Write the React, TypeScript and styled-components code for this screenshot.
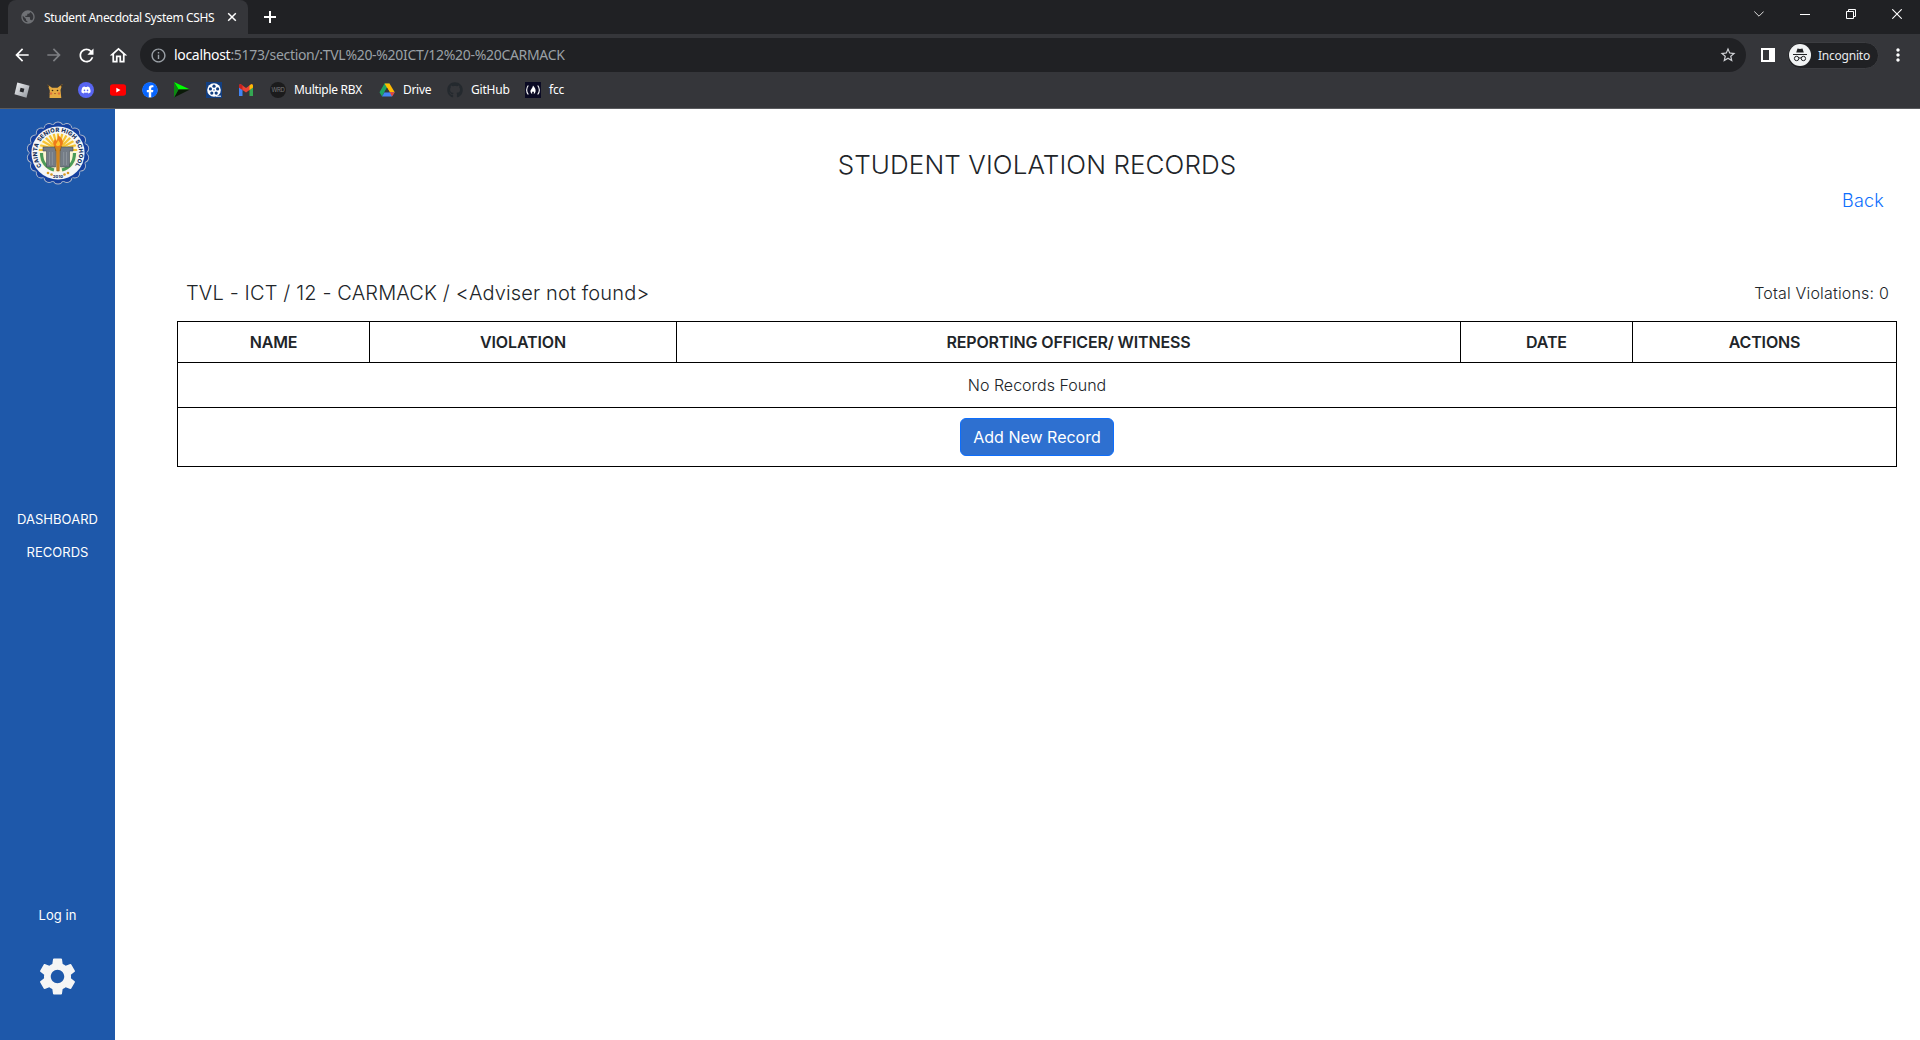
import React from "react";
import styled, { createGlobalStyle } from "styled-components";
import { FaDiscord, FaGithub, FaFacebook } from "react-icons/fa";
import {
  MdArrowBack,
  MdArrowForward,
  MdRefresh,
  MdOutlineHome,
  MdStarBorder,
  MdInfoOutline,
  MdSettings,
  MdMoreVert,
  MdPublic,
} from "react-icons/md";

const ui = `"Noto Sans", "Open Sans", sans-serif`;

const GlobalStyle = createGlobalStyle`
  *, *::before, *::after { box-sizing: border-box; }
  body { margin: 0; background: #fff; overflow: hidden; }
`;

const Window = styled.div`
  display: flex;
  flex-direction: column;
  height: 1040px;
  width: 1920px;
  font-family: Inter, sans-serif;
  color: #212529;
`;

const Chrome = styled.header`
  display: flex;
  flex-direction: column;
  flex: none;
  height: 109px;
  background: #35363a;
  border-bottom: 1px solid #5a5b5e;
  font-family: ${ui};
`;

const TabStrip = styled.div`
  display: flex;
  align-items: flex-start;
  height: 34px;
  padding-left: 8px;
  background: #202124;
`;

const Tab = styled.div`
  display: flex;
  align-items: center;
  width: 240px;
  height: 34px;
  padding-left: 12px;
  border-radius: 8px 8px 0 0;
  background: #35363a;
  color: #fff;
  font-size: 12px;
`;

const TabTitle = styled.span`
  width: 173px;
  margin-left: 8px;
  white-space: nowrap;
  letter-spacing: -0.35px;
`;

const Icon = styled.span<{ $left?: number; $color?: string }>`
  display: flex;
  flex: none;
  margin-left: ${(p) => p.$left ?? 0}px;
  color: ${(p) => p.$color ?? "#fff"};
`;

const WindowControls = styled.div`
  display: flex;
  gap: 36px;
  margin: 9px 18px 0 auto;
`;

const Toolbar = styled.div`
  display: flex;
  align-items: center;
  height: 42px;
  padding: 0 0 0 12px;
`;

const Address = styled.div`
  display: flex;
  align-items: center;
  width: 1606px;
  height: 34px;
  margin-left: 11px;
  padding: 0 9px 0 10px;
  border-radius: 17px;
  background: #202124;
`;

const Url = styled.span`
  flex: 1;
  margin-left: 7px;
  padding-bottom: 1px;
  color: #9aa0a6;
  font-size: 14px;
  letter-spacing: -0.31px;
  white-space: nowrap;
`;

const Host = styled.span`
  color: #fff;
`;

const Profile = styled.div`
  display: flex;
  align-items: center;
  gap: 7px;
  width: 92px;
  height: 27px;
  margin-left: 12px;
  padding-left: 1px;
  border: 1px solid #3c3d41;
  border-radius: 14px;
  background: #202124;
  color: #e8eaed;
  font-size: 12px;
  letter-spacing: -0.22px;
`;

const Bookmarks = styled.nav`
  display: flex;
  align-items: center;
  height: 28px;
  padding-left: 14px;
`;

const Bookmark = styled.a<{ $width: number; $spacing?: number }>`
  display: flex;
  flex: none;
  align-items: center;
  gap: 8px;
  width: ${(p) => p.$width}px;
  color: #fff;
  font-size: 12px;
  letter-spacing: ${(p) => p.$spacing ?? 0}px;
  white-space: nowrap;
`;

const BookmarkLabel = styled.span`
  padding-bottom: 1px;
`;

const Body = styled.div`
  display: flex;
  flex: 1;
  min-height: 0;
`;

const Sidebar = styled.aside`
  display: flex;
  flex-direction: column;
  align-items: center;
  justify-content: space-between;
  flex: none;
  width: 115px;
  padding: 12px 0 41px;
  background: #1e58aa;
  color: #fff;
`;

const Menu = styled.nav`
  display: flex;
  flex-direction: column;
  align-items: center;
  gap: 12px;
  padding-bottom: 19px;
`;

const SideLink = styled.a`
  color: #fff;
  font-size: 13px;
  line-height: 21px;
  letter-spacing: 0.04px;
`;

const Account = styled.div`
  display: flex;
  flex-direction: column;
  align-items: center;
  gap: 28px;
  color: #f5f5f5;
`;

const Main = styled.main`
  display: flex;
  flex-direction: column;
  flex: 1;
  padding: 36px 23px 0 62px;
`;

const Title = styled.h1`
  margin: 0;
  font-size: 26px;
  font-weight: 300;
  line-height: 40px;
  letter-spacing: 0.1px;
  text-align: center;
`;

const BackRow = styled.div`
  display: flex;
  justify-content: flex-end;
  padding-right: 13px;
`;

const BackLink = styled.a`
  color: #0d6efd;
  font-size: 18px;
  font-weight: 300;
  line-height: 32px;
  letter-spacing: 0.2px;
`;

const Summary = styled.div`
  display: flex;
  align-items: center;
  justify-content: space-between;
  height: 42px;
  margin: 55px 0 7px;
  padding: 0 8px 0 9px;
`;

const Section = styled.span`
  font-size: 20px;
  font-weight: 300;
  letter-spacing: 0.14px;
`;

const Total = styled.span`
  font-size: 16px;
  font-weight: 300;
  letter-spacing: 0.18px;
`;

const Table = styled.table`
  width: 1720px;
  table-layout: fixed;
  border-collapse: collapse;
  text-align: center;
`;

const HeadCell = styled.th<{ $width: number }>`
  width: ${(p) => p.$width}px;
  height: 41px;
  padding: 0;
  border: 1px solid #000;
  font-size: 16px;
  font-weight: 600;
  letter-spacing: -0.14px;
`;

const Cell = styled.td<{ $height: number }>`
  height: ${(p) => p.$height}px;
  padding: 0;
  border: 1px solid #000;
  font-size: 16px;
  font-weight: 300;
`;

const AddButton = styled.button`
  display: block;
  width: 154px;
  height: 38px;
  margin: 0 auto;
  padding: 0;
  border: 1px solid #0d6efd;
  border-radius: 6px;
  background: #2e70d0;
  color: #fff;
  font-family: inherit;
  font-size: 16px;
`;

const columns = [
  { label: "NAME", width: 192 },
  { label: "VIOLATION", width: 307 },
  { label: "REPORTING OFFICER/ WITNESS", width: 784 },
  { label: "DATE", width: 172 },
  { label: "ACTIONS", width: 264 },
];

const scallops = Array.from({ length: 18 }, (_, i) => {
  const a = (i * Math.PI) / 9 + Math.PI / 2;
  return { x: 32 + 26 * Math.cos(a), y: 32 + 26 * Math.sin(a) };
});

const Seal = () => (
  <svg width="64" height="64" viewBox="0 0 64 64">
    <defs>
      <path id="sealTop" d="M15.700 45.200A21 21 0 1 1 48.300 45.200" />
      <clipPath id="sealInner"><circle cx="32" cy="32" r="19.5" /></clipPath>
    </defs>
    {scallops.map((s, i) => (
      <circle key={i} cx={s.x} cy={s.y} r="5.5" fill="#b4bccb" />
    ))}
    {scallops.map((s, i) => (
      <circle key={i} cx={s.x} cy={s.y} r="4.600" fill="#1541a0" />
    ))}
    <circle cx="32" cy="32" r="28.500" fill="#1541a0" />
    <circle cx="32" cy="32" r="26.600" fill="#f4f6f8" />
    <circle cx="32" cy="32" r="19.6" fill="#fdf6d4" />
    <g clipPath="url(#sealInner)" stroke="#f5c233" strokeWidth="2.2">
      {Array.from({ length: 13 }, (_, i) => {
        const a = Math.PI + (i * Math.PI) / 12;
        return <line key={i} x1="32" y1="29" x2={32 + 24 * Math.cos(a)} y2={29 + 24 * Math.sin(a)} />;
      })}
    </g>
    <path d="M15.500 32c0 9 5 15 12.500 17M48.500 32c0 9-5 15-12.500 17" fill="none" stroke="#4b9b58" strokeWidth="3.2" />
    <path d="M17 26h13v3h-.5v17H20.500V30H17zM47 26H34v3h.5v17h9V30H47z" fill="#747c86" stroke="#454d57" strokeWidth=".6" />
    <path d="M23.5 31v13M26.300 31v13M37.700 31v13M40.5 31v13" stroke="#969da5" strokeWidth=".7" />
    <path d="M28.500 25.500h7l-1.700 5-.6 19.500h-2.400l-.6-19.500z" fill="#d2861c" stroke="#7c4710" strokeWidth=".5" />
    <path d="M32 14c4 3 5.500 6 4.700 9-.5 2-2 3.200-4.700 3.200S27.500 25 27.300 22.500c-.1-2 1.200-3 2-4.500.6.700.8 1.300.9 2 1.300-1.500 2-3.500 1.800-6z" fill="#ef7a1a" />
    <path d="M32 19c2 2 2.500 3.500 2 5-.7 1.600-3.600 1.500-4 0-.3-1.300 1.600-2.300 2-5z" fill="#ffc62e" />
    <text fontFamily="Inter, sans-serif" fontSize="5.800" fontWeight="800" fill="#16305a">
      <textPath href="#sealTop" textLength="93" startOffset="0">CAINTA SENIOR HIGH SCHOOL</textPath>
    </text>
    <g fill="#d99a22">
      <circle cx="22" cy="52" r="1.300" /><circle cx="25.500" cy="53.500" r="1.300" />
      <circle cx="38.500" cy="53.500" r="1.300" /><circle cx="42" cy="52" r="1.300" />
    </g>
    <text x="32" y="56.500" fontFamily="Inter, sans-serif" fontSize="4" fontWeight="800" fill="#16305a" textAnchor="middle">2010</text>
  </svg>
);

const Roblox = () => (
  <svg width="16" height="16" viewBox="0 0 16 16">
    <defs><linearGradient id="rbx" x1="0" y1="0" x2="1" y2="1"><stop stopColor="#f4f5f7" /><stop offset="1" stopColor="#8f949b" /></linearGradient></defs>
    <path d="M3.300.5L15.500 3.700 12.500 15.700.5 12.300z" fill="url(#rbx)" />
    <path d="M6.600 5.700l3.800 1-1 3.800-3.800-1z" fill="#26282c" />
  </svg>
);

const Pikachu = () => (
  <svg width="16" height="16" viewBox="0 0 16 16">
    <path d="M.5 2.500L5 5.800h5.500L15.500 2l-2 6 .8 8H2.500l.3-7.500z" fill="#e5ab42" />
    <path d="M.5 2.500l1.800 1.400-.8 1.600zM15.500 2l-2 1.600.8 1.700z" fill="#4a3519" />
    <circle cx="5.500" cy="8.500" r=".8" fill="#3a2814" /><circle cx="10.500" cy="8.500" r=".8" fill="#3a2814" />
    <circle cx="4" cy="11.500" r="1.200" fill="#e0703a" /><circle cx="12" cy="11.500" r="1.200" fill="#e0703a" />
    <path d="M7 11h2l-1 1.300z" fill="#8d3f23" />
  </svg>
);

const Discord = () => (
  <svg width="16" height="16" viewBox="0 0 16 16">
    <circle cx="8" cy="8" r="8" fill="#5865f2" />
    <FaDiscord x="3" y="3" size={10} color="#fff" />
  </svg>
);

const YouTube = () => (
  <svg width="16" height="16" viewBox="0 0 16 16">
    <rect y="2.300" width="16" height="11.500" rx="2.800" fill="#f00" />
    <path d="M6.300 5.700v4.700l4.200-2.350z" fill="#fff" />
  </svg>
);

const Facebook = () => (
  <svg width="16" height="16" viewBox="0 0 16 16">
    <circle cx="8" cy="8" r="7.500" fill="#fff" />
    <FaFacebook x="0" y="0" size={16} color="#0866ff" />
  </svg>
);

const GreenArrow = () => (
  <svg width="16" height="16" viewBox="0 0 16 16">
    <path d="M0 0l16 7.500H4.500z" fill="#0f0" />
    <path d="M0 15.500L4.500 7.500H16z" fill="#0a1a08" />
    <path d="M0 0v15.500L4.500 7.500z" fill="#0b8a10" />
  </svg>
);

const Reel = () => (
  <svg width="16" height="16" viewBox="0 0 16 16">
    <rect width="16" height="16" fill="#123f82" />
    <circle cx="8" cy="8" r="6.800" fill="#fff" />
    <g fill="#123f82">
      <circle cx="8" cy="4.200" r="1.600" /><circle cx="4.400" cy="6.900" r="1.600" /><circle cx="11.600" cy="6.900" r="1.600" />
      <circle cx="5.800" cy="11.100" r="1.600" /><circle cx="10.200" cy="11.100" r="1.600" /><circle cx="8" cy="8" r=".7" />
    </g>
    <path d="M10 14.200h5" stroke="#fff" />
  </svg>
);

const Gmail = () => (
  <svg width="16" height="16" viewBox="0 0 16 16">
    <path d="M1 14V5l3.500 2.500V14z" fill="#4285f4" />
    <path d="M11.500 14V7.500L15 5v9z" fill="#34a853" />
    <path d="M1 5.500V4c0-1.800 1.500-2 2.500-1.300L8 6l4.500-3.300C13.500 2 15 2.200 15 4v1.500L8 10.500z" fill="#ea4335" />
    <path d="M11.500 3.400l1-.7C13.500 2 15 2.200 15 4v1.500L11.500 8z" fill="#fbbc04" />
    <path d="M4.500 3.400l-1-.7C2.500 2 1 2.200 1 4v1.500L4.500 8z" fill="#c5221f" />
  </svg>
);

const Wrd = () => (
  <svg width="16" height="16" viewBox="0 0 16 16">
    <circle cx="8" cy="8" r="8" fill="#1b1b1c" />
    <text x="8" y="10.300" fontSize="6" fontFamily="Inter, sans-serif" fill="#77787a" textAnchor="middle" textLength="13">WRD</text>
  </svg>
);

const Drive = () => (
  <svg width="16" height="16" viewBox="0 0 16 16">
    <path d="M5.500 1.500h5L5.500 10 3 14.500.5 10.200z" fill="#1ea362" />
    <path d="M5.500 1.500h5l5.200 8.700h-5z" fill="#ffba00" />
    <path d="M5.500 10.200h10.200L13 14.500H3z" fill="#4285f4" />
    <path d="M10.700 10.200h5L13 14.500z" fill="#ea4335" />
    <path d="M8 5.700l2.700 4.500H5.400z" fill="#35363a" />
  </svg>
);

const FreeCodeCamp = () => (
  <svg width="16" height="16" viewBox="0 0 16 16">
    <rect width="16" height="16" fill="#0a0a23" />
    <path d="M3.300 3.500c-2.200 2.500-2.200 6.500 0 9M12.700 3.500c2.200 2.500 2.200 6.500 0 9" fill="none" stroke="#fff" strokeWidth="1.100" />
    <path d="M8 3.500c1.800 2 3 4 2.500 6.200-.3 1.200-1 2-2 2.500.8-1.200.7-2.200-.5-3-1 .8-1.300 1.800-.5 3-1-.5-1.800-1.300-2-2.500C5.200 7.700 7.500 6.500 8 3.500z" fill="#fff" />
  </svg>
);

const Incognito = () => (
  <svg width="22" height="22" viewBox="0 0 22 22">
    <circle cx="11" cy="11" r="11" fill="#f1f3f4" />
    <path d="M7.200 8.500l1.300-4 2.500.6 2.500-.6 1.300 4z" fill="#202124" />
    <path d="M4 10.500h14" stroke="#202124" />
    <g fill="none" stroke="#202124"><circle cx="7.600" cy="14.500" r="2.200" /><circle cx="14.400" cy="14.500" r="2.200" /><path d="M9.800 14.200q1.200-.8 2.400 0" /></g>
  </svg>
);

const bookmarks = [
  { icon: <Roblox />, width: 33 },
  { icon: <Pikachu />, width: 31 },
  { icon: <Discord />, width: 32 },
  { icon: <YouTube />, width: 32 },
  { icon: <Facebook />, width: 32 },
  { icon: <GreenArrow />, width: 32 },
  { icon: <Reel />, width: 32 },
  { icon: <Gmail />, width: 32 },
  { icon: <Wrd />, width: 109, label: "Multiple RBX", spacing: -0.3 },
  { icon: <Drive />, width: 68, label: "Drive", spacing: -0.3 },
  { icon: <FaGithub size={16} color="#24292e" />, width: 78, label: "GitHub", spacing: -0.2 },
  { icon: <FreeCodeCamp />, width: 60, label: "fcc", spacing: -0.2 },
];

export default function App() {
  return (
    <Window>
      <GlobalStyle />
      <Chrome>
        <TabStrip>
          <Tab>
            <Icon $color="#6f7175"><MdPublic size={16} /></Icon>
            <TabTitle>Student Anecdotal System CSHS</TabTitle>
            <Icon $left={10}>
              <svg width="10" height="10" viewBox="0 0 10 10"><path d="M1.200 1.200l7.600 7.600M8.800 1.200L1.200 8.800" stroke="#fff" strokeWidth="1.500" /></svg>
            </Icon>
          </Tab>
          <Icon $left={15}>
            <svg width="14" height="34" viewBox="0 0 14 34"><path d="M1 17h12M7 11v12" stroke="#fff" strokeWidth="2" /></svg>
          </Icon>
          <WindowControls>
            <svg width="10" height="10" viewBox="0 0 10 10"><path d="M.3 2.500L5 7.200l4.700-4.700" fill="none" stroke="#ddd" /></svg>
            <svg width="10" height="10" viewBox="0 0 10 10"><path d="M0 5.500h10" stroke="#fff" /></svg>
            <svg width="10" height="10" viewBox="0 0 10 10"><path d="M.5 2.500h7v7h-7zM2.500 2.500v-2h7v7h-2" fill="none" stroke="#fff" /></svg>
            <svg width="10" height="10" viewBox="0 0 10 10"><path d="M.3.3l9.400 9.400M9.700.3L.3 9.700" stroke="#fff" strokeWidth="1.100" /></svg>
          </WindowControls>
        </TabStrip>
        <Toolbar>
          <Icon><MdArrowBack size={20} /></Icon>
          <Icon $left={12} $color="#7d7f83"><MdArrowForward size={20} /></Icon>
          <Icon $left={12}><MdRefresh size={21} /></Icon>
          <Icon $left={11}><MdOutlineHome size={21} /></Icon>
          <Address>
            <Icon $color="#9aa0a6"><MdInfoOutline size={17} /></Icon>
            <Url><Host>localhost</Host>:5173/section/:TVL%20-%20ICT/12%20-%20CARMACK</Url>
            <Icon $color="#d0d2d6"><MdStarBorder size={18} /></Icon>
          </Address>
          <Icon $left={15}>
            <svg width="14" height="14" viewBox="0 0 14 14"><path d="M0 0h14v14H0zM2 2v10h6V2z" fill="#fff" fillRule="evenodd" /></svg>
          </Icon>
          <Profile><Incognito />Incognito</Profile>
          <Icon $left={9}><MdMoreVert size={20} /></Icon>
        </Toolbar>
        <Bookmarks>
          {bookmarks.map((b, i) => (
            <Bookmark key={i} $width={b.width} $spacing={b.spacing}>
              {b.icon}
              {b.label && <BookmarkLabel>{b.label}</BookmarkLabel>}
            </Bookmark>
          ))}
        </Bookmarks>
      </Chrome>
      <Body>
        <Sidebar>
          <Seal />
          <Menu>
            <SideLink>DASHBOARD</SideLink>
            <SideLink>RECORDS</SideLink>
          </Menu>
          <Account>
            <SideLink>Log in</SideLink>
            <MdSettings size={45} />
          </Account>
        </Sidebar>
        <Main>
          <Title>STUDENT VIOLATION RECORDS</Title>
          <BackRow><BackLink>Back</BackLink></BackRow>
          <Summary>
            <Section>TVL - ICT / 12 - CARMACK / &lt;Adviser not found&gt;</Section>
            <Total>Total Violations: 0</Total>
          </Summary>
          <Table>
            <thead>
              <tr>
                {columns.map((c) => <HeadCell key={c.label} $width={c.width}>{c.label}</HeadCell>)}
              </tr>
            </thead>
            <tbody>
              <tr><Cell colSpan={5} $height={45}>No Records Found</Cell></tr>
              <tr><Cell colSpan={5} $height={59}><AddButton>Add New Record</AddButton></Cell></tr>
            </tbody>
          </Table>
        </Main>
      </Body>
    </Window>
  );
}
